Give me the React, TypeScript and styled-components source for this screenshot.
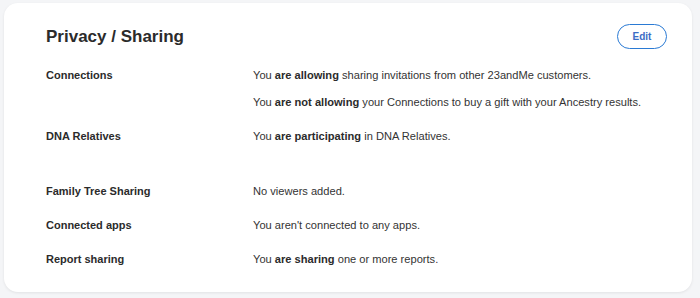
import styled, { createGlobalStyle } from "styled-components"

const GlobalStyle = createGlobalStyle`
    body {
        margin: 0;
        background-color: #f4f5f7;
        font-family: "Liberation Sans", Arial, sans-serif;
        color: #333333;
    }
`;

const Page = styled.div`
    padding: 3px 8px 5px 4px;
`;

const Card = styled.section`
    background-color: #ffffff;
    border-radius: 14px;
    box-shadow: 0 1px 3px rgba(0, 0, 0, 0.08);
    padding: 21px 25px 24px 42px;
`;

const Header = styled.div`
    display: flex;
    justify-content: space-between;
    align-items: center;
    margin-bottom: 18px;
`;

const Title = styled.h2`
    margin: 0;
    font-size: 17px;
    font-weight: bold;
    color: #2b2b2b;
    line-height: 24px;
`;

const EditButton = styled.button`
    width: 50px;
    height: 25px;
    border: 1.5px solid #2a7ad4;
    border-radius: 13px;
    background: #ffffff;
    color: #3b6cc4;
    font-family: "Liberation Sans", Arial, sans-serif;
    font-size: 10px;
    font-weight: bold;
    cursor: pointer;
`;

const Rows = styled.div`
    display: flex;
    flex-direction: column;
    gap: 17px;
`;

const Row = styled.div<{ extra?: number }>`
    display: grid;
    grid-template-columns: 207px 1fr;
    padding-bottom: ${props => props.extra ?? 0}px;
`;

const Label = styled.div`
    font-size: 11px;
    font-weight: bold;
    line-height: 17px;
    color: #2b2b2b;
`;

const Values = styled.div`
    display: flex;
    flex-direction: column;
    gap: 10px;
`;

const Value = styled.p`
    margin: 0;
    font-size: 11.1px;
    line-height: 17px;

    b {
        font-weight: bold;
        color: #2b2b2b;
    }
`;

const App = () => {
    return (
        <>
            <GlobalStyle />
            <Page>
                <Card>
                    <Header>
                        <Title>Privacy / Sharing</Title>
                        <EditButton>Edit</EditButton>
                    </Header>

                    <Rows>
                        <Row>
                            <Label>Connections</Label>
                            <Values>
                                <Value>You <b>are allowing</b> sharing invitations from other 23andMe customers.</Value>
                                <Value>You <b>are not allowing</b> your Connections to buy a gift with your Ancestry results.</Value>
                            </Values>
                        </Row>

                        <Row extra={21}>
                            <Label>DNA Relatives</Label>
                            <Values>
                                <Value>You <b>are participating</b> in DNA Relatives.</Value>
                            </Values>
                        </Row>

                        <Row>
                            <Label>Family Tree Sharing</Label>
                            <Values>
                                <Value>No viewers added.</Value>
                            </Values>
                        </Row>

                        <Row>
                            <Label>Connected apps</Label>
                            <Values>
                                <Value>You aren't connected to any apps.</Value>
                            </Values>
                        </Row>

                        <Row>
                            <Label>Report sharing</Label>
                            <Values>
                                <Value>You <b>are sharing</b> one or more reports.</Value>
                            </Values>
                        </Row>
                    </Rows>
                </Card>
            </Page>
        </>
    )
}

export default App;
